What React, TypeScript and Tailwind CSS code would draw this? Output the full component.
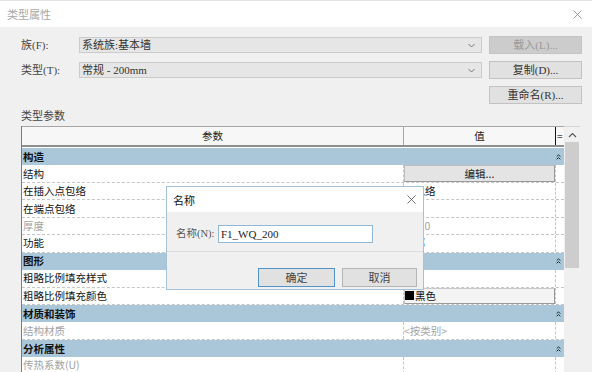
import React from "react";

const SERIF = { fontFamily: '"Liberation Serif", "Noto Sans CJK SC", serif' };
const SANS = { fontFamily: '"Noto Sans CJK SC", "Noto Sans", sans-serif' };

function XIcon({ size, color }: { size: number; color: string }) {
  return (
    <svg width={size} height={size} viewBox="0 0 10 10">
      <path d="M0.5 0.5 L9.5 9.5 M9.5 0.5 L0.5 9.5" stroke={color} strokeWidth="0.9" fill="none" />
    </svg>
  );
}

function Chevron() {
  return (
    <svg width="7" height="5" viewBox="0 0 7 5">
      <path d="M0.5 1 L3.5 4 L6.5 1" stroke="#6b6b6b" strokeWidth="0.9" fill="none" />
    </svg>
  );
}

function DoubleUp() {
  return (
    <svg width="5" height="6" viewBox="0 0 5 6">
      <path d="M0.7 2.6 L2.5 0.8 L4.3 2.6 M0.7 5.3 L2.5 3.5 L4.3 5.3" stroke="#222" strokeWidth="1" fill="none" />
    </svg>
  );
}

type Row =
  | { kind: "group"; label: string }
  | { kind: "item"; label: string; value?: string; gray?: boolean; type?: "button" | "color" };

const rows: Row[] = [
  { kind: "group", label: "构造" },
  { kind: "item", label: "结构", value: "编辑...", type: "button" },
  { kind: "item", label: "在插入点包络", value: "不包络" },
  { kind: "item", label: "在端点包络", value: "无" },
  { kind: "item", label: "厚度", value: "200.0", gray: true },
  { kind: "item", label: "功能", value: "外部" },
  { kind: "group", label: "图形" },
  { kind: "item", label: "粗略比例填充样式" },
  { kind: "item", label: "粗略比例填充颜色", value: "黑色", type: "color" },
  { kind: "group", label: "材质和装饰" },
  { kind: "item", label: "结构材质", value: "<按类别>", gray: true },
  { kind: "group", label: "分析属性" },
  { kind: "item", label: "传热系数(U)", gray: true },
];

function Combo({ text }: { text: string }) {
  return (
    <div className="flex-1 h-[16px] bg-[#e6e6e6] border border-[#cbcbcb] flex items-center justify-between pl-[2px] pr-[6px]">
      <span className="text-[11px] leading-[14px] text-[#333]" style={SERIF}>
        {text}
      </span>
      <Chevron />
    </div>
  );
}

function Btn({ text, disabled }: { text: string; disabled?: boolean }) {
  return (
    <div
      className={
        "h-[18px] w-[93px] flex items-center justify-center border text-[11px] leading-[14px] " +
        (disabled
          ? "bg-[#cccccc] border-[#c4c4c4] text-[#9a9a9a]"
          : "bg-[#e1e1e1] border-[#c2c2c2] text-[#333]")
      }
      style={SERIF}
    >
      {text}
    </div>
  );
}

export default function App() {
  return (
    <div className="relative w-[592px] h-[372px] overflow-hidden bg-[#f0f0f0]" style={SANS}>
      {/* title bar */}
      <div className="h-[27px] bg-white border-t border-[#e3e3e3] flex items-center justify-between pl-[7px] pr-[10px]">
        <span className="text-[11px] leading-[14px] text-[#a8a8a8]">类型属性</span>
        <XIcon size={9} color="#8a8a8a" />
      </div>

      {/* family / type rows */}
      <div className="flex pl-[21px] pt-[9px]">
        <div className="w-[461px] flex flex-col gap-[7px]">
          <div className="h-[18px] flex items-center">
            <span className="w-[58px] text-[11px] leading-[14px] text-[#444]" style={SERIF}>
              族(F):
            </span>
            <Combo text="系统族:基本墙" />
          </div>
          <div className="h-[18px] flex items-center">
            <span className="w-[58px] text-[11px] leading-[14px] text-[#444]" style={SERIF}>
              类型(T):
            </span>
            <Combo text="常规 - 200mm" />
          </div>
        </div>
        <div className="ml-[7px] flex flex-col gap-[7px]">
          <Btn text="载入(L)..." disabled />
          <Btn text="复制(D)..." />
          <Btn text="重命名(R)..." />
        </div>
      </div>

      <div className="mt-[5px] h-[15px] pl-[21px] text-[11px] leading-[15px] text-[#444]" style={SERIF}>
        类型参数
      </div>

      {/* table */}
      <div className="mt-[2px] ml-[21px] flex">
        <div className="w-[543px] border-l border-[#7c7c7c]">
          <div className="h-[21px] flex border-t border-[#a6a6a6] border-b-2 border-b-[#8e8e8e] bg-[#f7f7f7]">
            <div className="w-[382px] border-r border-[#a6a6a6] flex items-center justify-center text-[10.5px] leading-[14px] text-[#222]">
              参数
            </div>
            <div className="w-[152px] border-r border-[#111] flex items-center justify-center text-[10.5px] leading-[14px] text-[#222]">
              值
            </div>
            <div className="w-[8px] flex items-center overflow-hidden pl-[1px] text-[10px] leading-[14px] text-[#444]">
              =
            </div>
          </div>
          <div className="bg-white pt-[1px]">
            {rows.map((r, i) =>
              r.kind === "group" ? (
                <div key={i} className="h-[17.45px] bg-[#aac7da] flex items-center justify-between pl-[1px] pr-[3px]">
                  <span className="text-[10.5px] leading-[14px] font-bold text-[#111]">{r.label}</span>
                  <DoubleUp />
                </div>
              ) : (
                <div key={i} className="h-[17.45px] flex border-b border-dashed border-[#c6c6c6]">
                  <div
                    className={
                      "w-[382px] border-r border-dashed border-[#c6c6c6] flex items-center pl-[1px] text-[10.5px] leading-[14px] " +
                      (r.gray ? "text-[#a3a3a3]" : "text-[#111]")
                    }
                  >
                    {r.label}
                  </div>
                  <div className="w-[152px] border-r border-dashed border-[#c6c6c6] flex">
                    {r.type === "button" ? (
                      <div className="flex-1 bg-[#e4e4e4] border border-[#bdbdbd] border-r-[#9a9a9a] border-b-[#9a9a9a] flex items-center justify-center text-[10.5px] leading-[14px] text-[#222]">
                        {r.value}
                      </div>
                    ) : r.type === "color" ? (
                      <div className="flex-1 bg-[#f4f4f4] border border-[#c8c8c8] border-r-[#9a9a9a] border-b-[#9a9a9a] flex items-center text-[10.5px] leading-[14px] text-[#111]">
                        <span className="w-[9px] h-[9px] bg-black mr-[1px]" />
                        {r.value}
                      </div>
                    ) : (
                      <div
                        className={
                          "flex-1 flex items-center text-[10.5px] leading-[14px] " +
                          (r.gray ? "text-[#a3a3a3]" : "text-[#111]")
                        }
                      >
                        {r.value}
                      </div>
                    )}
                  </div>
                  <div className="w-[8px]" />
                </div>
              )
            )}
          </div>
        </div>
        {/* scrollbar */}
        <div className="w-[16px] flex flex-col border-t border-[#d6d6d6]">
          <div className="h-[15px] flex items-center justify-center">
            <svg width="9" height="6" viewBox="0 0 9 6">
              <path d="M1 5 L4.5 1.5 L8 5" stroke="#555" strokeWidth="1.1" fill="none" />
            </svg>
          </div>
          <div className="mx-[1px] h-[126px] bg-[#cdcdcd]" />
        </div>
      </div>

      {/* name dialog */}
      <div className="absolute left-[166px] top-[186px] w-[258px] h-[104px] border border-[#a3c2d8] bg-[#f0f0f0] flex flex-col">
        <div className="h-[25px] bg-white flex items-center justify-between pl-[6px] pr-[7px]">
          <span className="text-[11px] leading-[14px] text-[#111]">名称</span>
          <XIcon size={9} color="#555" />
        </div>
        <div className="flex items-center pl-[9px] mt-[13px]">
          <span className="w-[42px] text-[10.5px] leading-[14px] text-[#555]" style={SERIF}>
            名称(N):
          </span>
          <div className="w-[155px] h-[18px] bg-white border border-[#8fb8d8] flex items-center pl-[2px] text-[11px] leading-[14px] text-[#222]" style={SERIF}>
            F1_WQ_200
          </div>
        </div>
        <div className="mt-[8px] border-t border-[#dcdcdc]" />
        <div className="flex justify-end gap-[7px] pr-[6px] mt-[16px]">
          <div className="w-[77px] h-[19px] bg-[#e1e1e1] border border-[#4f93c8] flex items-center justify-center text-[11px] leading-[14px] text-[#444]" style={SERIF}>
            确定
          </div>
          <div className="w-[75px] h-[19px] bg-[#e1e1e1] border border-[#b5b5b5] flex items-center justify-center text-[11px] leading-[14px] text-[#444]" style={SERIF}>
            取消
          </div>
        </div>
      </div>
    </div>
  );
}
